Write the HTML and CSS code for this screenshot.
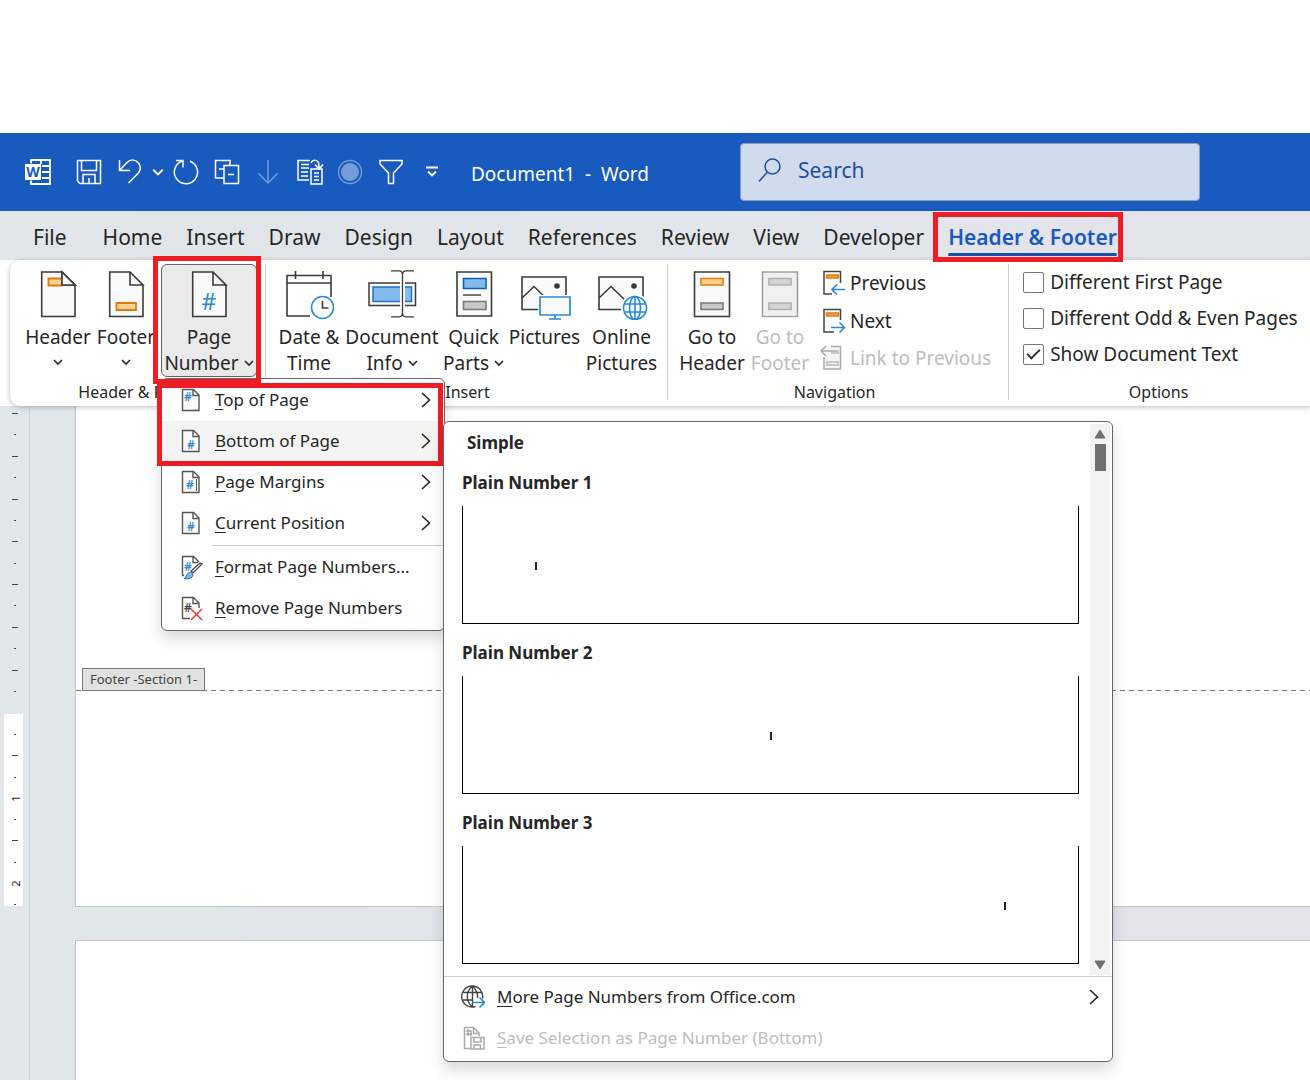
FILE: index.html
```html
<!DOCTYPE html>
<html lang="en">
<head>
  <meta charset="UTF-8">
  <meta name="viewport" content="width=device-width, initial-scale=1.0">
  <title>Document1 - Word</title>
  <link rel="stylesheet" href="styles.css">
</head>
<body>
  <!-- shared icon shapes -->
  <svg class="defs" aria-hidden="true">
    <symbol id="page" viewBox="0 0 50 50">
      <path d="M8.7 2H29l13 13v31.5H8.7z" fill="#fafafa"/>
      <path d="M29 2v13h13L29 2H8.7v44.5H42V15" fill="none" stroke="#3b3b3b" stroke-width="1.6"/>
    </symbol>
    <symbol id="small-page" viewBox="0 0 24 26">
      <path d="M3.5 2.5h11l5.5 5.5v15.5h-16.5z" fill="#fafafa" stroke="#555" stroke-width="1.4"/>
      <path d="M14 2.5v6h6" fill="none" stroke="#555" stroke-width="1.4"/>
    </symbol>
    <symbol id="picture" viewBox="0 0 52 50">
      <path d="M3 7h44v32.5H3z" fill="#fafafa" stroke="#3b3b3b" stroke-width="1.6"/>
      <path d="M3 28l12-11.5L30 31" fill="none" stroke="#3b3b3b" stroke-width="1.6"/>
      <circle cx="38" cy="16" r="2.8" fill="#3b3b3b" stroke="none"/>
    </symbol>
    <symbol id="chevron-down" viewBox="0 0 10 8">
      <path d="M1 2l4 4 4-4" fill="none" stroke="currentColor" stroke-width="1.6"/>
    </symbol>
    <symbol id="chevron-right" viewBox="0 0 12 18">
      <path d="M2 2l7.5 7L2 16" fill="none" stroke="currentColor" stroke-width="1.6"/>
    </symbol>
  </svg>

  <header class="titlebar">
    <div class="quick-access">
      <button class="qa-btn app-icon" aria-label="Word">
        <svg width="28" height="28" viewBox="0 0 28 28" fill="none" stroke="#fff" stroke-width="1.8">
          <path d="M7 5.500V2h19v24H7v-3.500M18 8h8M18 14h8M18 20h8M17 2v4"/>
          <rect x="1" y="6" width="16" height="16" fill="#fff" stroke="none"/>
          <text x="9" y="19" class="w-mark" text-anchor="middle">W</text>
        </svg>
      </button>
      <button class="qa-btn" aria-label="Save">
        <svg width="28" height="28" viewBox="0 0 28 28" fill="none" stroke="#fff" stroke-width="1.5">
          <path d="M2.5 2.5h23v23H5l-2.5-2.5zM6.500 2.500v10h15v-10M8 25v-8.500h12V25M14 20v5"/>
        </svg>
      </button>
      <button class="qa-btn" aria-label="Undo">
        <svg width="28" height="28" viewBox="0 0 28 28" fill="none" stroke="#fff" stroke-width="1.5">
          <path d="M3.5 2v10.500H14M4 12l7-7.500c4-4 9-2.500 11.500.500 3 3.500 2 8-1 11L12.500 25"/>
        </svg>
      </button>
      <button class="qa-btn narrow" aria-label="Undo options">
        <svg width="12" height="10"><use href="#chevron-down"/></svg>
      </button>
      <button class="qa-btn" aria-label="Redo">
        <svg width="28" height="28" viewBox="0 0 28 28" fill="none" stroke="#fff" stroke-width="1.5">
          <path d="M4 2.500h7v7M10.500 3A11.600 11.600 0 1 0 18 3.200"/>
        </svg>
      </button>
      <button class="qa-btn" aria-label="Switch windows">
        <svg width="28" height="28" viewBox="0 0 28 28" fill="none" stroke="#fff" stroke-width="1.5">
          <path d="M11 20H2.500V2.500H17V7M6 11h5M11 7.500h14.500v18H11zM15 16.500h6"/>
        </svg>
      </button>
      <button class="qa-btn faded" aria-label="Next item">
        <svg width="28" height="28" viewBox="0 0 28 28" fill="none" stroke="#fff" stroke-width="1.5">
          <path d="M14 2v23M4.500 15.500L14 25l9.500-9.500"/>
        </svg>
      </button>
      <button class="qa-btn" aria-label="Copy format">
        <svg width="30" height="28" viewBox="0 0 30 28" fill="none" stroke="#fff" stroke-width="1.5">
          <path d="M15 22H4V2.500h12M7 6.500h8M7 10h8M7 14h7M7 18h7M17 11h11v15H17zM20 15h5M20 18.500h5M20 22h5"/>
          <path d="M17 5c2-4 8-4 8 3v3M21 6.500l4 4.500 4-4.500"/>
        </svg>
      </button>
      <button class="qa-btn faded" aria-label="Record">
        <svg width="28" height="28" viewBox="0 0 28 28">
          <circle cx="14" cy="14" r="11.5" fill="none" stroke="#fff" stroke-width="1.4"/>
          <circle cx="14" cy="14" r="9" fill="#fff"/>
        </svg>
      </button>
      <button class="qa-btn" aria-label="Filter">
        <svg width="28" height="28" viewBox="0 0 28 28" fill="none" stroke="#fff" stroke-width="1.5">
          <path d="M3 2.500h22v3.500l-8.500 9v10.500h-5V15L3 6z"/>
        </svg>
      </button>
      <button class="qa-btn" aria-label="Customize Quick Access Toolbar">
        <svg width="14" height="12" viewBox="0 0 14 12" fill="none" stroke="#fff" stroke-width="1.8">
          <path d="M1 1.500h12M3 5.500l4 4 4-4"/>
        </svg>
      </button>
    </div>
    <span class="doc-title">Document1&nbsp; -&nbsp; Word</span>
    <label class="search">
      <svg width="26" height="26" viewBox="0 0 26 26" fill="none" stroke="#1f4fa0" stroke-width="1.5">
        <circle cx="15.5" cy="9.5" r="7.500"/><path d="M10.500 15L2 24.500"/>
      </svg>
      <input type="text" placeholder="Search" aria-label="Search">
    </label>
  </header>

  <nav class="tabs">
    <a href="#" class="file">File</a>
    <a href="#">Home</a>
    <a href="#">Insert</a>
    <a href="#">Draw</a>
    <a href="#">Design</a>
    <a href="#">Layout</a>
    <a href="#">References</a>
    <a href="#">Review</a>
    <a href="#">View</a>
    <a href="#">Developer</a>
    <a href="#" class="active">Header &amp; Footer</a>
  </nav>

  <section class="ribbon">
    <div class="group group-hf">
      <div class="tools">
        <button class="tool w-m">
          <svg width="50" height="50"><use href="#page"/>
            <path d="M15.500 8.500H29v7H15.500z" fill="#fbd48c" stroke="#e07a10" stroke-width="1.8"/>
            <path d="M29 2v13h13z" fill="#fafafa" stroke="#3b3b3b" stroke-width="1.6"/>
          </svg>
          <span>Header</span>
          <svg class="chev" width="10" height="8"><use href="#chevron-down"/></svg>
        </button>
        <button class="tool w-m">
          <svg width="50" height="50"><use href="#page"/>
            <path d="M15.500 33h19.500v7H15.500z" fill="#fbd48c" stroke="#e07a10" stroke-width="1.8"/>
          </svg>
          <span>Footer</span>
          <svg class="chev" width="10" height="8"><use href="#chevron-down"/></svg>
        </button>
        <div class="page-number">
          <button class="tool pressed">
            <svg width="50" height="50"><use href="#page"/>
              <text x="25" y="40" class="hash big" text-anchor="middle">#</text>
            </svg>
            <span>Page</span>
            <span>Number <svg class="inline-chev" width="10" height="8"><use href="#chevron-down"/></svg></span>
          </button>

          <div class="menu">
            <button class="item">
              <svg width="24" height="26"><use href="#small-page"/><text x="9" y="14" class="hash" text-anchor="middle">#</text></svg>
              <span><u>T</u>op of Page</span>
              <svg class="arrow" width="12" height="18"><use href="#chevron-right"/></svg>
            </button>
            <button class="item selected">
              <svg width="24" height="26"><use href="#small-page"/><text x="12" y="21" class="hash" text-anchor="middle">#</text></svg>
              <span><u>B</u>ottom of Page</span>
              <svg class="arrow" width="12" height="18"><use href="#chevron-right"/></svg>
            </button>
            <button class="item">
              <svg width="24" height="26"><use href="#small-page"/><text x="11" y="20" class="hash" text-anchor="middle">#</text><path d="M17.500 10v12" stroke="#555"/></svg>
              <span><u>P</u>age Margins</span>
              <svg class="arrow" width="12" height="18"><use href="#chevron-right"/></svg>
            </button>
            <button class="item">
              <svg width="24" height="26"><use href="#small-page"/><text x="12" y="21" class="hash" text-anchor="middle">#</text></svg>
              <span><u>C</u>urrent Position</span>
              <svg class="arrow" width="12" height="18"><use href="#chevron-right"/></svg>
            </button>
            <hr>
            <button class="item">
              <svg width="24" height="26" fill="none">
                <path d="M5 21.500H3.500v-19h11L20 8M14 2.500v6h5" stroke="#555" stroke-width="1.4"/>
                <text x="9" y="17" class="hash" text-anchor="middle">#</text>
                <path d="M23 10l-9 9-2-2 9-8z" fill="#fff" stroke="#444" stroke-width="1.2"/>
                <path d="M5 24.500c2.500 0 2-5 5.500-6 3-.5 4.500 2.500 2.500 4.500s-5 2-8 1.500z" fill="#7fb8ea" stroke="#1768b8"/>
              </svg>
              <span><u>F</u>ormat Page Numbers...</span>
            </button>
            <button class="item">
              <svg width="24" height="26" fill="none">
                <path d="M11 23.500H3.500v-21h11L20 8v5M14 2.500v6h5" stroke="#555" stroke-width="1.4"/>
                <text x="9" y="17" class="hash dark" text-anchor="middle">#</text>
                <path d="M12 14l11 11M23 14L12 25" stroke="#e8393b" stroke-width="1.5"/>
              </svg>
              <span><u>R</u>emove Page Numbers</span>
            </button>

            <div class="gallery">
              <div class="gallery-body">
                <div class="gallery-list">
                  <h2>Simple</h2>
                  <h3>Plain Number 1</h3>
                  <div class="preview left"><i></i></div>
                  <h3>Plain Number 2</h3>
                  <div class="preview center"><i></i></div>
                  <h3>Plain Number 3</h3>
                  <div class="preview right"><i></i></div>
                </div>
                <div class="scrollbar">
                  <svg width="12" height="10"><path d="M6 1l5 8H1z" fill="#6f6f6f" stroke="#6f6f6f" stroke-linejoin="round"/></svg>
                  <span class="thumb"></span>
                  <svg class="down" width="12" height="10"><path d="M6 9l5-8H1z" fill="#6f6f6f" stroke="#6f6f6f" stroke-linejoin="round"/></svg>
                </div>
              </div>
              <button class="item">
                <svg width="24" height="26" fill="none" stroke="#444" stroke-width="1.4">
                  <path d="M14.500 22.500a10.500 10.500 0 1 1 7-8M11.500 2c-7 6-7 15 0 21M11.500 2c4 4 5.500 8 5 12M11.500 2v21M2.500 8.500h18.500M2 16h10"/>
                  <path d="M11 18.500h12M18.500 13.500l5 5-5 5" stroke="#2b8bd2" stroke-width="1.6"/>
                </svg>
                <span><u>M</u>ore Page Numbers from Office.com</span>
                <svg class="arrow" width="12" height="18"><use href="#chevron-right"/></svg>
              </button>
              <button class="item" disabled>
                <svg width="24" height="26" fill="none" stroke="#aaa" stroke-width="1.5">
                  <path d="M9 23.500H3.500v-21h9l5.500 5.500v3M12.500 2.500v6h5.500M5 9h6M5 6h5M7 4v7M10 5v6"/>
                  <path d="M10 12.500h13v11.500H10zM13 13v4h7v-4M13 24v-4h6.500v4"/>
                </svg>
                <span><u>S</u>ave Selection as Page Number (Bottom)</span>
              </button>
            </div>
          </div>
        </div>
      </div>
      <div class="group-name">Header &amp; Footer</div>
    </div>

    <div class="group group-insert">
      <div class="tools">
        <button class="tool w-m">
          <svg width="50" height="50" fill="none" stroke="#3b3b3b" stroke-width="1.6">
            <path d="M26 46H3V5.500h44V27M3 13h44M11.500 1v8M39 1v8"/>
            <circle cx="38.5" cy="37.5" r="11" fill="#fafafa" stroke="#2b8bd2"/>
            <path d="M38.500 31v7h6"/>
          </svg>
          <span>Date &amp;</span>
          <span>Time</span>
        </button>
        <button class="tool w-xl">
          <svg width="50" height="50" fill="none" stroke="#3b3b3b" stroke-width="1.5">
            <path d="M2 13h46.500v22.500H2z" fill="#fafafa"/>
            <path d="M6 17h38.500v14.500H6z" fill="#83bbec" stroke="#1f74c4"/>
            <path d="M35.500 4v40" stroke="#fff" stroke-width="5"/>
            <path d="M24 .8h8q3.500 0 3.500 4v38q0 4-3.500 4h-8M47 .8h-8q-3.500 0-3.500 4M47 46.800h-8q-3.500 0-3.500-4" stroke-width="1.3"/>
          </svg>
          <span>Document</span>
          <span>Info <svg class="inline-chev" width="10" height="8"><use href="#chevron-down"/></svg></span>
        </button>
        <button class="tool w-s">
          <svg width="50" height="50" fill="none" stroke-width="1.6">
            <path d="M8 2h34.500v44H8z" fill="#fafafa" stroke="#3b3b3b"/>
            <path d="M14.500 8.500H37v10H14.500z" fill="#83bbec" stroke="#0f62b5"/>
            <path d="M14 25h18" stroke="#555"/>
            <path d="M14.500 31.500H37v8H14.500z" fill="#c8c8c8" stroke="#7a7a7a"/>
          </svg>
          <span>Quick</span>
          <span>Parts <svg class="inline-chev" width="10" height="8"><use href="#chevron-down"/></svg></span>
        </button>
        <button class="tool w-l">
          <svg width="52" height="50" fill="none" stroke="#2b8bd2" stroke-width="1.7">
            <use href="#picture"/>
            <path d="M19 25h33v22H19z" fill="#fff" stroke="none"/>
            <path d="M21 27h30v18H21zM36 45v4M30 49h12" fill="#fafafa"/>
          </svg>
          <span>Pictures</span>
        </button>
        <button class="tool w-l">
          <svg width="52" height="50" fill="none" stroke="#2b8bd2" stroke-width="1.6">
            <use href="#picture"/>
            <circle cx="39" cy="38" r="14" fill="#fff" stroke="none"/>
            <circle cx="39" cy="38" r="11.500" fill="#fafafa"/>
            <ellipse cx="39" cy="38" rx="5.500" ry="11.500"/>
            <path d="M39 26.500v23M28.500 34h21M28.500 42h21"/>
          </svg>
          <span>Online</span>
          <span>Pictures</span>
        </button>
      </div>
      <div class="group-name">Insert</div>
    </div>

    <div class="group group-nav">
      <div class="tools">
        <button class="tool w-m">
          <svg width="50" height="50" stroke-width="1.6">
            <path d="M7.500 2h35v44.500h-35z" fill="#fafafa" stroke="#3b3b3b"/>
            <path d="M14 8.500h22V15H14z" fill="#fbd48c" stroke="#e07a10"/>
            <path d="M14 33h22v6.500H14z" fill="#c8c8c8" stroke="#7a7a7a"/>
          </svg>
          <span>Go to</span>
          <span>Header</span>
        </button>
        <button class="tool w-m" disabled>
          <svg width="50" height="50" stroke-width="1.6">
            <path d="M7.500 2h35v44.500h-35z" fill="#f0f0f0" stroke="#a0a0a0"/>
            <path d="M14 8.500h22V15H14zM14 33h22v6.500H14z" fill="#d4d4d4" stroke="#b0b0b0"/>
          </svg>
          <span>Go to</span>
          <span>Footer</span>
        </button>
        <div class="nav-list">
          <button>
            <svg width="26" height="26" fill="none" stroke="#444" stroke-width="1.5">
              <path d="M12 24H4V1.500h16.500V13"/>
              <path d="M6.500 5h12v3h-12z" fill="#f5a74a" stroke="#e07a10"/>
              <path d="M25 19.500H12M17 14.500l-5 5 5 5" stroke="#2b8bd2" stroke-width="1.6"/>
            </svg>
            Previous
          </button>
          <button>
            <svg width="26" height="26" fill="none" stroke="#444" stroke-width="1.5">
              <path d="M14 24H4V1.500h16.500V12"/>
              <path d="M6.500 5h12v3h-12z" fill="#f5a74a" stroke="#e07a10"/>
              <path d="M11 19.500h13M19.500 14.500l5 5-5 5" stroke="#2b8bd2" stroke-width="1.6"/>
            </svg>
            Next
          </button>
          <button disabled>
            <svg width="26" height="26" fill="none" stroke="#aaa" stroke-width="1.5">
              <path d="M11 1.500h9.500V24H4V12" fill="#f3f3f3"/>
              <path d="M7 17h11v3H7zM11 8h7V5" stroke="#bbb"/>
              <path d="M17 6H1M6 1L1 6l5 5"/>
            </svg>
            Link to Previous
          </button>
        </div>
      </div>
      <div class="group-name">Navigation</div>
    </div>

    <div class="group group-options">
      <div class="tools options">
        <label><input type="checkbox"> Different First Page</label>
        <label><input type="checkbox"> Different Odd &amp; Even Pages</label>
        <label><input type="checkbox" checked> Show Document Text</label>
      </div>
      <div class="group-name">Options</div>
    </div>
  </section>

  <main class="workspace">
    <div class="ruler">
      <div class="marks margin">
        <i></i><b></b><i></i><b></b><i></i><b></b><i></i><b></b><i></i><b></b><i></i><b></b><i></i><b></b>
      </div>
      <div class="marks body">
        <b></b><i></i><b></b><span>1</span><b></b><i></i><b></b><span>2</span><b></b>
      </div>
    </div>
    <div class="pages">
      <div class="sheet first">
        <div class="footer-area"><span class="footer-tag">Footer -Section 1-</span></div>
      </div>
      <div class="sheet next"></div>
    </div>
  </main>
</body>
</html>
```
FILE: styles.css
```css
*,
*::before,
*::after {
  box-sizing: border-box;
}

body {
  margin: 0;
  padding-top: 133px;
  min-height: 100vh;
  display: flex;
  flex-direction: column;
  overflow: hidden;
  background: #fff;
  color: #262626;
  font-family: "Noto Sans", "Open Sans", sans-serif;
  font-size: 19px;
}

button {
  font: inherit;
  color: inherit;
  background: none;
  border: none;
  padding: 0;
}

button:disabled {
  color: #bdbdbd;
}

.defs {
  position: absolute;
  width: 0;
  height: 0;
}

/* title bar */
.titlebar {
  display: flex;
  align-items: center;
  height: 78px;
  padding-left: 18px;
  background: #185abd;
  color: #fff;
}

.quick-access {
  display: flex;
  gap: 1px;
}

.qa-btn {
  display: flex;
  align-items: center;
  justify-content: center;
  width: 40px;
  height: 40px;
}

.qa-btn.app-icon {
  margin-right: 10px;
}

.qa-btn.narrow {
  width: 14px;
}

.faded svg {
  opacity: 0.4;
}

.w-mark {
  font-size: 14px;
  font-weight: bold;
  fill: #185abd;
  stroke: none;
}

.doc-title {
  margin-left: 19px;
  padding-top: 4px;
  white-space: nowrap;
}

.search {
  display: flex;
  align-items: center;
  gap: 15px;
  width: 460px;
  height: 58px;
  margin: 0 110px 0 auto;
  padding: 0 16px 4px;
  background: #d1dbee;
  border: 1px solid #8f9db5;
  border-radius: 4px;
}

.search input {
  flex: 1;
  min-width: 0;
  border: none;
  outline: none;
  padding: 0;
  background: none;
  font: inherit;
  font-size: 21px;
}

.search input::placeholder {
  color: #1f4fa0;
  opacity: 1;
}

/* tabs */
.tabs {
  display: flex;
  gap: 24px;
  height: 49px;
  padding-left: 33px;
  background: linear-gradient(90deg, #e1e6e9, #e3e4ea);
  font-size: 21px;
  line-height: 52px;
  white-space: nowrap;
}

.tabs a {
  color: #262626;
  text-decoration: none;
}

.tabs .file {
  margin-right: 12px;
}

.tabs .active {
  position: relative;
  color: #185abd;
  font-weight: 600;
}

.tabs .active::before {
  content: "";
  position: absolute;
  left: 0;
  right: 0;
  top: 42px;
  height: 3px;
  border-radius: 2px;
  background: #1850ad;
}

/* red callout frames */
.tabs .active::after,
.page-number::after,
.menu::after {
  content: "";
  position: absolute;
  border: 5px solid #ee1c24;
  pointer-events: none;
}

.tabs .active::after {
  inset: 1px -6px -2px -15px;
  z-index: 3;
}

.page-number::after {
  inset: -8px -4px -7px -8px;
  z-index: 2;
}

.menu::after {
  top: 4px;
  left: -5px;
  width: 286px;
  height: 83px;
}

/* ribbon */
.ribbon {
  position: relative;
  z-index: 2;
  display: flex;
  height: 146px;
  margin-left: 10px;
  padding: 4px 0 6px;
  background: #fff;
  border-radius: 10px 0 0 10px;
  box-shadow: 0 1px 5px rgba(0, 0, 0, 0.28);
}

.group {
  display: flex;
  flex-direction: column;
  justify-content: space-between;
  border-right: 1px solid #d0d0d0;
}

.group-hf {
  padding: 0 8px 0 14px;
}

.group-insert {
  padding: 0 7px 0 9px;
}

.group-nav {
  padding: 0 17px 0 10px;
}

.group-options {
  flex: 1;
  padding-left: 14px;
  border-right: none;
}

.group-name {
  font-size: 16px;
  line-height: 16px;
  text-align: center;
}

.group-options .group-name {
  padding-right: 16px;
}

.tools {
  display: flex;
  height: 113px;
}

.tool {
  display: flex;
  flex-direction: column;
  align-items: center;
  flex: none;
  height: 113px;
  padding-top: 6px;
  line-height: 26px;
  white-space: nowrap;
}

.tool > span:first-of-type {
  margin-top: 4px;
}

.tool .chev {
  margin-top: 8px;
}

.inline-chev {
  vertical-align: 3px;
}

.w-s { width: 65px; }
.w-m { width: 68px; }
.w-l { width: 77px; }
.w-xl { width: 98px; }

.page-number {
  position: relative;
  width: 96px;
  margin-left: 1px;
}

.pressed {
  width: 96px;
  padding-top: 5px;
  background: #ebeaea;
  border: 1px solid #666;
  border-radius: 6px;
}

.hash {
  font-size: 12px;
  font-weight: 600;
  fill: #2b8bd2;
}

.hash.big {
  font-size: 23px;
  font-weight: normal;
}

.hash.dark {
  fill: #444;
}

.nav-list {
  display: flex;
  flex-direction: column;
  padding-left: 6px;
}

.nav-list button {
  display: flex;
  align-items: center;
  gap: 4px;
  height: 38px;
  white-space: nowrap;
}

.options {
  flex-direction: column;
}

.options label {
  display: flex;
  align-items: center;
  gap: 6px;
  height: 36px;
  white-space: nowrap;
}

.options input {
  appearance: none;
  display: grid;
  place-items: center;
  width: 21px;
  height: 21px;
  margin: 0;
  border: 1px solid #777;
  border-radius: 2px;
  background: #fff;
}

.options input:checked::before {
  content: "";
  width: 13px;
  height: 7px;
  margin-bottom: 4px;
  border-left: 2px solid #333;
  border-bottom: 2px solid #333;
  rotate: -45deg;
}

/* page number menu */
.menu {
  position: absolute;
  top: 114px;
  left: 0;
  width: 284px;
  padding: 1px 0;
  background: #fff;
  border: 1px solid #666;
  border-radius: 6px;
  box-shadow: 0 8px 14px rgba(0, 0, 0, 0.15);
  font-size: 17px;
  z-index: 1;
}

.item {
  display: flex;
  align-items: center;
  gap: 12px;
  width: 100%;
  height: 41px;
  padding: 0 12px 2px 17px;
  text-align: left;
  white-space: nowrap;
}

.item.selected {
  background: #f4f4f4;
}

.item u {
  text-underline-offset: 3px;
  text-decoration-thickness: 1px;
}

.item .arrow {
  margin-left: auto;
}

.menu hr {
  margin: 1px 0 1px 50px;
  border: none;
  border-top: 1px solid #d0d0d0;
}

.gallery {
  position: absolute;
  top: 42px;
  left: 281px;
  width: 670px;
  background: #fff;
  border: 1px solid #666;
  border-radius: 6px;
  box-shadow: 0 8px 14px rgba(0, 0, 0, 0.15);
  padding-bottom: 2px;
  z-index: 2;
}

.gallery-body {
  display: flex;
  justify-content: space-between;
  padding: 0 2px 0 18px;
  border-bottom: 1px solid #d0d0d0;
}

.gallery-list {
  width: 617px;
  padding-bottom: 2px;
}

.gallery h2,
.gallery h3 {
  margin: 0;
  font-size: 17px;
  font-weight: bold;
}

.gallery h2 {
  padding-left: 5px;
  line-height: 42px;
}

.gallery h3 {
  line-height: 38px;
  padding-bottom: 4px;
}

.preview {
  display: flex;
  align-items: center;
  height: 118px;
  margin-bottom: 10px;
  padding: 2px 72px 0;
  border: 1px solid #000;
  border-top: none;
}

.preview i {
  width: 2px;
  height: 8px;
  background: #222;
}

.preview.center {
  justify-content: center;
}

.preview.right {
  justify-content: flex-end;
}

.scrollbar {
  display: flex;
  flex-direction: column;
  align-items: center;
  width: 20px;
  margin: 2px 0 1px;
  padding: 5px 0;
  background: #f3f3f3;
}

.scrollbar .thumb {
  width: 11px;
  height: 27px;
  margin-top: 5px;
  background: #6f6f6f;
}

.scrollbar .down {
  margin-top: auto;
}

/* document area */
.workspace {
  flex: 1;
  display: flex;
  background: linear-gradient(90deg, #e1e6e9 15%, #e4e3ec 60%);
}

.ruler {
  width: 30px;
  padding: 7px 6px 0 4px;
  border-right: 1px solid #d2d6d9;
}

.marks {
  display: flex;
  flex-direction: column;
  align-items: center;
  justify-content: space-between;
  padding-left: 2px;
}

.marks.margin {
  height: 279px;
  margin-bottom: 22px;
}

.marks.body {
  height: 192px;
  padding-top: 20px;
  padding-bottom: 1px;
  background: #fff;
}

.marks i {
  width: 6px;
  height: 1px;
  background: #444;
}

.marks b {
  width: 2px;
  height: 1px;
  background: #444;
}

.marks span {
  height: 1px;
  width: 12px;
  font-size: 11px;
  line-height: 1px;
  text-align: center;
  rotate: -90deg;
}

.pages {
  flex: 1;
  display: flex;
  flex-direction: column;
  gap: 33px;
  padding-left: 45px;
}

.sheet {
  background: #fff;
  border: 1px solid #c6c6c6;
  border-right: none;
}

.first {
  display: flex;
  flex-direction: column;
  justify-content: flex-end;
  height: 501px;
  border-top: none;
}

.footer-area {
  position: relative;
  height: 216px;
  background: repeating-linear-gradient(90deg, #777 0 5px, transparent 5px 9px) top / 100% 1px no-repeat;
}

.footer-tag {
  position: absolute;
  left: 6px;
  bottom: 215px;
  padding: 0 7px;
  border: 1px solid #777;
  background: #e1e1e1;
  color: #444;
  font-size: 13px;
  line-height: 21px;
  white-space: nowrap;
}

.next {
  flex: 1;
  border-bottom: none;
}
```
